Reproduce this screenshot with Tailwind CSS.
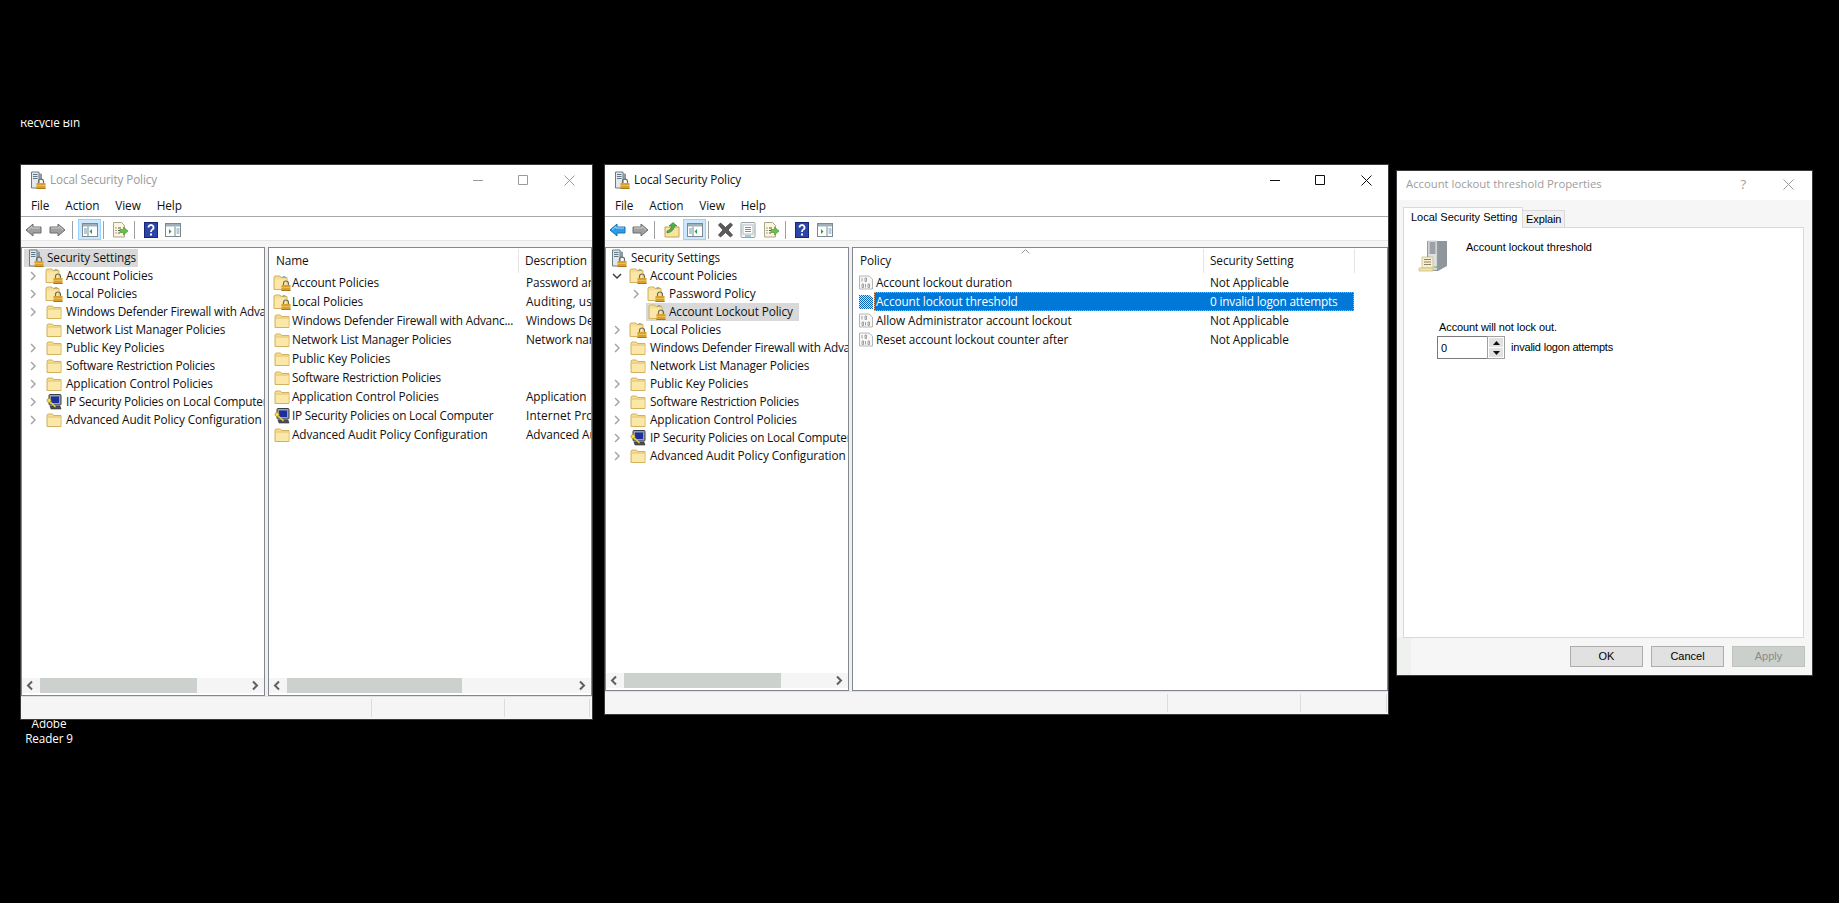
<!DOCTYPE html>
<html lang="en">
<head>
<meta charset="UTF-8">
<title>Local Security Policy</title>
<script src="https://cdn.jsdelivr.net/npm/@tailwindcss/browser@4"></script>
</head>
<body class="w-[1839px] h-[903px] bg-black overflow-hidden relative font-['Open_Sans',sans-serif] text-[11.8px] tracking-[-0.1px] text-[#111]">

<!-- shared icons -->
<svg class="absolute w-0 h-0" aria-hidden="true">
  <defs>
    <pattern id="dither" width="2" height="2" patternUnits="userSpaceOnUse">
      <rect width="2" height="2" fill="#0a62b8"/><rect width="1" height="1" fill="#d4e6f5"/><rect x="1" y="1" width="1" height="1" fill="#d4e6f5"/>
    </pattern>
    <symbol id="folder" viewBox="0 0 16 16">
      <path d="M1 14.500V3L2 2h4.500l1 1.500H15v11z" fill="#f7dd92" stroke="#d3b25f"/>
      <path d="M2 5.500h12.500v8.500H2z" fill="#fbe8a8"/>
      <path d="M1.500 5h13" stroke="#e3c678"/>
    </symbol>
    <symbol id="folderlock" viewBox="0 0 18 16">
      <path d="M1 14.500V2L2 1h5l1 1.500h6v12z" fill="#f7dd92" stroke="#d3b25f"/>
      <path d="M2 4.500h11.500V14H2z" fill="#fbe8a8"/>
      <path d="M9.500 1.800h3" stroke="#5a9bd4"/>
      <path d="M10.500 10V8.500a2.500 2.500 0 0 1 5 0V10" fill="none" stroke="#6e6a58" stroke-width="1.200"/>
      <rect x="8.500" y="10" width="9" height="6" fill="#d9a02e"/>
      <path d="M8.500 12.500h9" stroke="#eec46a" stroke-width=".8"/>
      <path d="M8.500 15.500h9" stroke="#a67819"/>
    </symbol>
    <symbol id="serverlock" viewBox="0 0 16 18">
      <path d="M1.500 1h7.500v16H1.500z" fill="#e4e8ea" stroke="#6d7a82"/>
      <path d="M3 3.500h4.500M3 5.500h4.500M3 7.500h4.500" stroke="#5d7688"/>
      <path d="M9 2l3 1v6H9z" fill="#8d9aa3"/>
      <path d="M8.500 12v-1.500a2.500 2.500 0 0 1 5 0V12" fill="none" stroke="#6e6a58" stroke-width="1.200"/>
      <rect x="6.500" y="12" width="9" height="6" fill="#d9a02e"/>
      <path d="M6.500 14.500h9" stroke="#eec46a" stroke-width=".8"/>
      <path d="M6.500 17.500h9" stroke="#a67819"/>
    </symbol>
    <symbol id="ipsec" viewBox="0 0 16 16">
      <rect x="3" y="0.500" width="12" height="10.500" rx="1" fill="#9aa0a6" stroke="#3b3f44"/>
      <rect x="5" y="2.500" width="8" height="6.500" fill="#1b2f9e"/>
      <path d="M4 12h10l1 3H5z" fill="#4d5157" stroke="#2a2c30" stroke-width=".6"/>
      <circle cx="3" cy="6.500" r="2" fill="#f4e04a" stroke="#a89420" stroke-width=".7"/>
      <path d="M4.500 8l5 5" stroke="#e8d23a" stroke-width="1.500"/>
    </symbol>
    <symbol id="binary" viewBox="0 0 14 15">
      <path d="M.5 1h9.500l3.500 3v10H.5z" fill="#f8f8f8" stroke="#b5b5b5"/>
      <path d="M3 3v3.500M6 3h1.500v3.500H6zM3 9h1.500v3.500H3zM6.500 9v3.500M9 9h1.500v3.500H9z" fill="none" stroke="#a0a0a0"/>
    </symbol>
    <symbol id="binarysel" viewBox="0 0 14 15">
      <path d="M0 1h10l4 3v11H0z" fill="url(#dither)"/>
    </symbol>
    <symbol id="chevr" viewBox="0 0 16 16"><path d="M6 4l4 4-4 4" fill="none" stroke="#a6a6a6" stroke-width="1.500"/></symbol>
    <symbol id="chevd" viewBox="0 0 16 16"><path d="M4 6l4 4 4-4" fill="none" stroke="#404040" stroke-width="1.500"/></symbol>
    <symbol id="sbl" viewBox="0 0 15 15"><path d="M9 3.500L5 7.500l4 4" fill="none" stroke="#5f5f5f" stroke-width="2"/></symbol>
    <symbol id="sbr" viewBox="0 0 15 15"><path d="M6 3.500l4 4-4 4" fill="none" stroke="#5f5f5f" stroke-width="2"/></symbol>
    <symbol id="back" viewBox="0 0 17 16"><path d="M1 8l7-6v3h8v6H8v3z" fill="#a0a0a0" stroke="#6d6d6d"/><path d="M3 8l4-3.500V6h8" fill="none" stroke="#d0d0d0"/></symbol>
    <symbol id="backon" viewBox="0 0 17 16"><path d="M1 8l7-6v3h8v6H8v3z" fill="#2a9be6" stroke="#1a6fb5"/><path d="M3 8l4-3.500V6h8" fill="none" stroke="#a9dcf8"/></symbol>
    <symbol id="fwd" viewBox="0 0 17 16"><path d="M16 8L9 2v3H1v6h8v3z" fill="#a0a0a0" stroke="#6d6d6d"/><path d="M2 6h8V4.500L14 8" fill="none" stroke="#d0d0d0"/></symbol>
    <symbol id="panel" viewBox="0 0 16 14">
      <rect x=".5" y=".5" width="15" height="13" fill="#fff" stroke="#7a8a90"/>
      <path d="M1 1h14v2.500H1z" fill="#9fb0b8"/>
      <path d="M6 3.500V13" stroke="#7a8a90"/>
      <path d="M2 6h3M2 8h3M2 10h3" stroke="#6a9ab5"/>
      <path d="M10 6v5L7.500 8.500z" fill="#22a34a"/>
    </symbol>
    <symbol id="panelr" viewBox="0 0 16 14">
      <rect x=".5" y=".5" width="15" height="13" fill="#fff" stroke="#7a8a90"/>
      <path d="M1 1h14v2.500H1z" fill="#9fb0b8"/>
      <path d="M10 3.500V13" stroke="#7a8a90"/>
      <path d="M11.500 6h3M11.500 8h3M11.500 10h3" stroke="#6a9ab5"/>
      <path d="M4 6v5l2.500-2.500z" fill="#22a34a"/>
    </symbol>
    <symbol id="export" viewBox="0 0 16 16">
      <path d="M1.500.5h8l3 3v11.500h-11z" fill="#fbf6dc" stroke="#a9a68a"/>
      <path d="M3.500 6h1M3.500 8.500h1M3.500 11h1M6 6h3M6 8.500h2M6 11h2" stroke="#555"/>
      <path d="M8 7.500h3.500V5L16 9l-4.500 4v-2.500H8z" fill="#6cc04a" stroke="#3f8f2c" stroke-width=".6"/>
    </symbol>
    <symbol id="help" viewBox="0 0 14 16">
      <rect width="14" height="16" fill="#2c46a8"/><rect x=".5" y=".5" width="13" height="15" fill="none" stroke="#16277a"/>
      <path d="M4.500 5.500a2.500 2.500 0 1 1 3.500 2.300c-.8.400-1 1-1 2.200" fill="none" stroke="#fff" stroke-width="1.800"/>
      <rect x="6" y="11.500" width="2" height="2" fill="#fff"/>
    </symbol>
    <symbol id="upfolder" viewBox="0 0 16 16">
      <path d="M1 15V5h14v10z" fill="#f9e3a0" stroke="#c4a458"/>
      <path d="M3 9c3-1 4-2.500 4.500-5H5l4-3.500L13 4h-2.500C10 8 7 10.500 3 11z" fill="#4fb04a" stroke="#2d7f2b" stroke-width=".6"/>
    </symbol>
    <symbol id="delete" viewBox="0 0 17 16">
      <path d="M1.500 3L3.500 1l5 4.500L13.500 1l2 2-4.500 5 4.500 5-2 2-5-4.500L3.500 15l-2-2L6 8z" fill="#5b5b5b" stroke="#3f3f3f" stroke-width=".8"/>
    </symbol>
    <symbol id="props" viewBox="0 0 16 16">
      <rect x="1" y=".5" width="14" height="15" rx="1" fill="#f2f4f5" stroke="#9aa5aa"/>
      <rect x="3" y="3" width="10" height="9" fill="#fff" stroke="#b4bdc2"/>
      <path d="M5 5.500h6M5 7.500h6M5 9.500h6" stroke="#7f8c93"/>
      <path d="M5 14h6" stroke="#3aa0dc"/>
    </symbol>
    <symbol id="serverdoc" viewBox="0 0 30 32">
      <path d="M9 1h20v25l-9 5H9z" fill="#8f979c"/>
      <path d="M10 1h9v29h-9z" fill="#dfe2e3" stroke="#a4aaad" stroke-width=".5"/>
      <path d="M11.500 3h6M11.500 5h6M11.500 7h6M11.500 9h6M11.500 11h6M11.500 13h6" stroke="#59636a"/>
      <path d="M16 27h3" stroke="#4fb04a"/>
      <path d="M4 17h11v11H4z" fill="#f9efcf" stroke="#c4b27c" stroke-width=".7"/>
      <path d="M1 28h14v3H1z" fill="#f3e3ae" stroke="#c4b27c" stroke-width=".7"/>
      <path d="M6 19.500h7M6 22h7M6 24.500h7" stroke="#8b8268"/>
    </symbol>
  </defs>
</svg>

<!-- desktop labels behind the windows -->
<div class="absolute left-[20px] top-[120px] h-[8px] overflow-hidden text-white text-[11.7px] leading-[8px] whitespace-nowrap"><span class="block -mt-[2px]">Recycle Bin</span></div>
<div class="absolute left-[24px] top-[716px] w-[50px] text-center text-white text-[11.7px] leading-[15px] whitespace-nowrap">Adobe<br>Reader 9</div>

<!-- Local Security Policy, inactive -->
<section class="absolute left-[20px] top-[164px] w-[573px] h-[556px] bg-white border border-[#3a3a3a] flex flex-col">
  <header class="h-[31px] flex items-center shrink-0 pl-[9px] pb-px text-[#9a9a9a] text-[11.7px]">
    <svg class="w-[16px] h-[18px] mr-[4px]"><use href="#serverlock"/></svg>
    <span>Local Security Policy</span>
    <div class="ml-auto flex items-center pr-[17px] gap-[35px]">
      <svg class="w-[10px] h-[10px]" viewBox="0 0 10 10"><path d="M0 5.500h10" stroke="#9a9a9a"/></svg>
      <svg class="w-[10px] h-[10px]" viewBox="0 0 10 10"><path d="M.5.500h9v9h-9z" fill="none" stroke="#9a9a9a"/></svg>
      <svg class="w-[11px] h-[11px] ml-[1px]" viewBox="0 0 11 11"><path d="M.500.500l10 10M10.500.500l-10 10" stroke="#9a9a9a"/></svg>
    </div>
  </header>
  <nav class="h-[21px] shrink-0 flex items-center border-b border-[#a3a9ad] pl-[10px] gap-[16px]">
    <span>File</span><span>Action</span><span>View</span><span>Help</span>
  </nav>
  <div class="h-[23px] shrink-0 flex items-center pl-[4px] pt-[2px]">
    <svg class="w-[17px] h-[16px]"><use href="#back"/></svg>
    <svg class="w-[17px] h-[16px] ml-[7px]"><use href="#fwd"/></svg>
    <span class="w-px h-[18px] bg-[#a0a0a0] ml-[6px]"></span>
    <span class="w-[23px] h-[21px] ml-[5px] bg-[#cce8ff] border border-[#99d1ff] flex items-center justify-center"><svg class="w-[16px] h-[14px]"><use href="#panel"/></svg></span>
    <span class="w-px h-[18px] bg-[#a0a0a0] ml-[2px]"></span>
    <svg class="w-[16px] h-[16px] ml-[8px]"><use href="#export"/></svg>
    <span class="w-px h-[18px] bg-[#a0a0a0] ml-[6px]"></span>
    <svg class="w-[14px] h-[16px] ml-[9px]"><use href="#help"/></svg>
    <svg class="w-[16px] h-[14px] ml-[7px]"><use href="#panelr"/></svg>
  </div>
  <div class="h-[7px] shrink-0 border-t border-[#e6e6e6] bg-[#f5f5f5]"></div>
  <div class="h-[449px] shrink-0 flex gap-[3px] bg-[#f0f0f0]">
    <div class="w-[244px] border border-[#828790] bg-white flex flex-col overflow-hidden">
      <ul class="flex-1 overflow-hidden pt-px whitespace-nowrap">
        <li class="h-[18px] pl-[2px] flex items-center"><span class="w-[114px] h-[18px] bg-[#d9d9d9] flex items-center pl-[4px]"><svg class="w-[16px] h-[18px] mr-[3px] shrink-0"><use href="#serverlock"/></svg>Security Settings</span></li>
        <li class="h-[18px] pl-[3px] flex items-center"><svg class="w-[16px] h-[16px] mr-[4px] shrink-0"><use href="#chevr"/></svg><svg class="w-[18px] h-[16px] mr-[3px] shrink-0"><use href="#folderlock"/></svg>Account Policies</li>
        <li class="h-[18px] pl-[3px] flex items-center"><svg class="w-[16px] h-[16px] mr-[4px] shrink-0"><use href="#chevr"/></svg><svg class="w-[18px] h-[16px] mr-[3px] shrink-0"><use href="#folderlock"/></svg>Local Policies</li>
        <li class="h-[18px] pl-[3px] flex items-center tracking-[-0.2px]"><svg class="w-[16px] h-[16px] mr-[5px] shrink-0"><use href="#chevr"/></svg><svg class="w-[16px] h-[16px] mr-[4px] shrink-0"><use href="#folder"/></svg>Windows Defender Firewall with Advanced Security</li>
        <li class="h-[18px] pl-[24px] flex items-center tracking-[-0.2px]"><svg class="w-[16px] h-[16px] mr-[4px] shrink-0"><use href="#folder"/></svg>Network List Manager Policies</li>
        <li class="h-[18px] pl-[3px] flex items-center"><svg class="w-[16px] h-[16px] mr-[5px] shrink-0"><use href="#chevr"/></svg><svg class="w-[16px] h-[16px] mr-[4px] shrink-0"><use href="#folder"/></svg>Public Key Policies</li>
        <li class="h-[18px] pl-[3px] flex items-center tracking-[-0.2px]"><svg class="w-[16px] h-[16px] mr-[5px] shrink-0"><use href="#chevr"/></svg><svg class="w-[16px] h-[16px] mr-[4px] shrink-0"><use href="#folder"/></svg>Software Restriction Policies</li>
        <li class="h-[18px] pl-[3px] flex items-center"><svg class="w-[16px] h-[16px] mr-[5px] shrink-0"><use href="#chevr"/></svg><svg class="w-[16px] h-[16px] mr-[4px] shrink-0"><use href="#folder"/></svg>Application Control Policies</li>
        <li class="h-[18px] pl-[3px] flex items-center tracking-[-0.2px]"><svg class="w-[16px] h-[16px] mr-[5px] shrink-0"><use href="#chevr"/></svg><svg class="w-[16px] h-[16px] mr-[4px] shrink-0"><use href="#ipsec"/></svg>IP Security Policies on Local Computer</li>
        <li class="h-[18px] pl-[3px] flex items-center"><svg class="w-[16px] h-[16px] mr-[5px] shrink-0"><use href="#chevr"/></svg><svg class="w-[16px] h-[16px] mr-[4px] shrink-0"><use href="#folder"/></svg>Advanced Audit Policy Configuration</li>
      </ul>
      <div class="h-[15px] mb-[2px] shrink-0 bg-[#f5f5f5] flex items-center">
        <svg class="w-[15px] h-[15px] ml-px shrink-0"><use href="#sbl"/></svg>
        <span class="w-[157px] h-[15px] ml-[2px] bg-[#cdd1cd]"></span>
        <svg class="w-[15px] h-[15px] ml-auto mr-[2px] shrink-0"><use href="#sbr"/></svg>
      </div>
    </div>
    <div class="flex-1 border border-[#828790] bg-white flex flex-col overflow-hidden">
      <div class="h-[25px] shrink-0 flex items-center whitespace-nowrap">
        <span class="w-[250px] h-[24px] pl-[7px] flex items-center border-r border-[#e5e5e5]">Name</span>
        <span class="pl-[6px]">Description</span>
      </div>
      <ul class="flex-1 whitespace-nowrap overflow-hidden">
        <li class="h-[19px] flex items-center pl-[4px]"><svg class="w-[18px] h-[16px] mr-px shrink-0"><use href="#folderlock"/></svg><span class="w-[234px] shrink-0">Account Policies</span><span>Password and account lockout policies</span></li>
        <li class="h-[19px] flex items-center pl-[4px]"><svg class="w-[18px] h-[16px] mr-px shrink-0"><use href="#folderlock"/></svg><span class="w-[234px] shrink-0">Local Policies</span><span class="tracking-[0.1px]">Auditing, user rights and security options</span></li>
        <li class="h-[19px] flex items-center pl-[5px]"><svg class="w-[16px] h-[16px] mr-[2px] shrink-0"><use href="#folder"/></svg><span class="w-[234px] shrink-0 tracking-[-0.2px]">Windows Defender Firewall with Advanc...</span><span>Windows Defender Firewall</span></li>
        <li class="h-[19px] flex items-center pl-[5px]"><svg class="w-[16px] h-[16px] mr-[2px] shrink-0"><use href="#folder"/></svg><span class="w-[234px] shrink-0 tracking-[-0.2px]">Network List Manager Policies</span><span>Network name, icons</span></li>
        <li class="h-[19px] flex items-center pl-[5px]"><svg class="w-[16px] h-[16px] mr-[2px] shrink-0"><use href="#folder"/></svg><span class="w-[234px] shrink-0">Public Key Policies</span></li>
        <li class="h-[19px] flex items-center pl-[5px]"><svg class="w-[16px] h-[16px] mr-[2px] shrink-0"><use href="#folder"/></svg><span class="w-[234px] shrink-0 tracking-[-0.2px]">Software Restriction Policies</span></li>
        <li class="h-[19px] flex items-center pl-[5px]"><svg class="w-[16px] h-[16px] mr-[2px] shrink-0"><use href="#folder"/></svg><span class="w-[234px] shrink-0">Application Control Policies</span><span>Application</span></li>
        <li class="h-[19px] flex items-center pl-[5px]"><svg class="w-[16px] h-[16px] mr-[2px] shrink-0"><use href="#ipsec"/></svg><span class="w-[234px] shrink-0 tracking-[-0.2px]">IP Security Policies on Local Computer</span><span class="tracking-[0.1px]">Internet Protocol</span></li>
        <li class="h-[19px] flex items-center pl-[5px]"><svg class="w-[16px] h-[16px] mr-[2px] shrink-0"><use href="#folder"/></svg><span class="w-[234px] shrink-0">Advanced Audit Policy Configuration</span><span>Advanced Audit</span></li>
      </ul>
      <div class="h-[15px] mb-[2px] shrink-0 bg-[#f5f5f5] flex items-center">
        <svg class="w-[15px] h-[15px] ml-px shrink-0"><use href="#sbl"/></svg>
        <span class="w-[175px] h-[15px] ml-[2px] bg-[#cdd1cd]"></span>
        <svg class="w-[15px] h-[15px] ml-auto mr-[2px] shrink-0"><use href="#sbr"/></svg>
      </div>
    </div>
  </div>
  <footer class="flex-1 bg-[#f5f5f5] flex items-stretch py-[2px] border-t border-[#e0e0e0]">
    <span class="w-[351px] border-r border-[#dcdcdc]"></span>
    <span class="w-[133px] border-r border-[#dcdcdc]"></span>
    <span class="w-[85px] border-r border-[#dcdcdc]"></span>
  </footer>
</section>

<!-- Local Security Policy, active -->
<section class="absolute left-[604px] top-[164px] w-[785px] h-[551px] bg-white border border-[#3a3a3a] flex flex-col">
  <header class="h-[31px] flex items-center shrink-0 pl-[9px] pb-px text-[11.7px]">
    <svg class="w-[16px] h-[18px] mr-[4px]"><use href="#serverlock"/></svg>
    <span>Local Security Policy</span>
    <div class="ml-auto flex items-center pr-[16px] gap-[35px]">
      <svg class="w-[10px] h-[10px]" viewBox="0 0 10 10"><path d="M0 5.500h10" stroke="#111"/></svg>
      <svg class="w-[10px] h-[10px]" viewBox="0 0 10 10"><path d="M.5.500h9v9h-9z" fill="none" stroke="#111"/></svg>
      <svg class="w-[11px] h-[11px] ml-[1px]" viewBox="0 0 11 11"><path d="M.500.500l10 10M10.500.500l-10 10" stroke="#111"/></svg>
    </div>
  </header>
  <nav class="h-[21px] shrink-0 flex items-center border-b border-[#a3a9ad] pl-[10px] gap-[16px]">
    <span>File</span><span>Action</span><span>View</span><span>Help</span>
  </nav>
  <div class="h-[23px] shrink-0 flex items-center pl-[4px] pt-[2px]">
    <svg class="w-[17px] h-[16px]"><use href="#backon"/></svg>
    <svg class="w-[17px] h-[16px] ml-[6px]"><use href="#fwd"/></svg>
    <span class="w-px h-[18px] bg-[#a0a0a0] ml-[5px]"></span>
    <svg class="w-[16px] h-[16px] ml-[9px]"><use href="#upfolder"/></svg>
    <span class="w-[23px] h-[21px] ml-[3px] bg-[#cce8ff] border border-[#99d1ff] flex items-center justify-center"><svg class="w-[16px] h-[14px]"><use href="#panel"/></svg></span>
    <span class="w-px h-[18px] bg-[#a0a0a0] ml-[2px]"></span>
    <svg class="w-[17px] h-[16px] ml-[8px]"><use href="#delete"/></svg>
    <svg class="w-[16px] h-[16px] ml-[6px]"><use href="#props"/></svg>
    <svg class="w-[16px] h-[16px] ml-[7px]"><use href="#export"/></svg>
    <span class="w-px h-[18px] bg-[#a0a0a0] ml-[6px]"></span>
    <svg class="w-[14px] h-[16px] ml-[9px]"><use href="#help"/></svg>
    <svg class="w-[16px] h-[14px] ml-[8px]"><use href="#panelr"/></svg>
  </div>
  <div class="h-[7px] shrink-0 border-t border-[#e6e6e6] bg-[#f5f5f5]"></div>
  <div class="h-[444px] shrink-0 flex gap-[3px] bg-[#f0f0f0]">
    <div class="w-[244px] border border-[#828790] bg-white flex flex-col overflow-hidden">
      <ul class="flex-1 overflow-hidden pt-px whitespace-nowrap">
        <li class="h-[18px] pl-[5px] flex items-center"><svg class="w-[16px] h-[18px] mr-[4px] shrink-0"><use href="#serverlock"/></svg>Security Settings</li>
        <li class="h-[18px] pl-[3px] flex items-center"><svg class="w-[16px] h-[16px] mr-[4px] shrink-0"><use href="#chevd"/></svg><svg class="w-[18px] h-[16px] mr-[3px] shrink-0"><use href="#folderlock"/></svg>Account Policies</li>
        <li class="h-[18px] pl-[22px] flex items-center"><svg class="w-[16px] h-[16px] mr-[3px] shrink-0"><use href="#chevr"/></svg><svg class="w-[18px] h-[16px] mr-[4px] shrink-0"><use href="#folderlock"/></svg>Password Policy</li>
        <li class="h-[18px] pl-[40px] flex items-center"><span class="w-[153px] h-[18px] bg-[#d9d9d9] flex items-center pl-[2px]"><svg class="w-[18px] h-[16px] mr-[3px] shrink-0"><use href="#folderlock"/></svg>Account Lockout Policy</span></li>
        <li class="h-[18px] pl-[3px] flex items-center"><svg class="w-[16px] h-[16px] mr-[4px] shrink-0"><use href="#chevr"/></svg><svg class="w-[18px] h-[16px] mr-[3px] shrink-0"><use href="#folderlock"/></svg>Local Policies</li>
        <li class="h-[18px] pl-[3px] flex items-center tracking-[-0.2px]"><svg class="w-[16px] h-[16px] mr-[5px] shrink-0"><use href="#chevr"/></svg><svg class="w-[16px] h-[16px] mr-[4px] shrink-0"><use href="#folder"/></svg>Windows Defender Firewall with Advanced Security</li>
        <li class="h-[18px] pl-[24px] flex items-center tracking-[-0.2px]"><svg class="w-[16px] h-[16px] mr-[4px] shrink-0"><use href="#folder"/></svg>Network List Manager Policies</li>
        <li class="h-[18px] pl-[3px] flex items-center"><svg class="w-[16px] h-[16px] mr-[5px] shrink-0"><use href="#chevr"/></svg><svg class="w-[16px] h-[16px] mr-[4px] shrink-0"><use href="#folder"/></svg>Public Key Policies</li>
        <li class="h-[18px] pl-[3px] flex items-center tracking-[-0.2px]"><svg class="w-[16px] h-[16px] mr-[5px] shrink-0"><use href="#chevr"/></svg><svg class="w-[16px] h-[16px] mr-[4px] shrink-0"><use href="#folder"/></svg>Software Restriction Policies</li>
        <li class="h-[18px] pl-[3px] flex items-center"><svg class="w-[16px] h-[16px] mr-[5px] shrink-0"><use href="#chevr"/></svg><svg class="w-[16px] h-[16px] mr-[4px] shrink-0"><use href="#folder"/></svg>Application Control Policies</li>
        <li class="h-[18px] pl-[3px] flex items-center tracking-[-0.2px]"><svg class="w-[16px] h-[16px] mr-[5px] shrink-0"><use href="#chevr"/></svg><svg class="w-[16px] h-[16px] mr-[4px] shrink-0"><use href="#ipsec"/></svg>IP Security Policies on Local Computer</li>
        <li class="h-[18px] pl-[3px] flex items-center"><svg class="w-[16px] h-[16px] mr-[5px] shrink-0"><use href="#chevr"/></svg><svg class="w-[16px] h-[16px] mr-[4px] shrink-0"><use href="#folder"/></svg>Advanced Audit Policy Configuration</li>
      </ul>
      <div class="h-[15px] mb-[2px] shrink-0 bg-[#f5f5f5] flex items-center">
        <svg class="w-[15px] h-[15px] ml-px shrink-0"><use href="#sbl"/></svg>
        <span class="w-[157px] h-[15px] ml-[2px] bg-[#cdd1cd]"></span>
        <svg class="w-[15px] h-[15px] ml-auto mr-[2px] shrink-0"><use href="#sbr"/></svg>
      </div>
    </div>
    <div class="flex-1 border border-[#828790] bg-white flex flex-col overflow-hidden relative">
      <svg class="absolute left-[168px] top-[1px] w-[9px] h-[5px]" viewBox="0 0 9 5"><path d="M.5 4.500l4-4 4 4" fill="none" stroke="#9a9a9a"/></svg>
      <div class="h-[25px] shrink-0 flex items-center whitespace-nowrap">
        <span class="w-[351px] h-[24px] pl-[7px] flex items-center border-r border-[#e5e5e5]">Policy</span>
        <span class="w-[151px] h-[24px] pl-[6px] flex items-center border-r border-[#e5e5e5]">Security Setting</span>
      </div>
      <ul class="whitespace-nowrap">
        <li class="h-[19px] flex items-center pl-[6px]"><svg class="w-[14px] h-[15px] mr-px shrink-0"><use href="#binary"/></svg><span class="w-[330px] shrink-0 pl-[2px] mr-px">Account lockout duration</span><span class="pl-[5px]">Not Applicable</span></li>
        <li class="h-[19px] flex items-center pl-[6px]"><svg class="w-[14px] h-[15px] mr-px shrink-0"><use href="#binarysel"/></svg><span class="w-[480px] shrink-0 h-[19px] bg-[#0078d7] text-white flex items-center border border-dotted border-[#f0a060]"><span class="w-[331px] shrink-0 pl-px">Account lockout threshold</span><span class="pl-[4px] tracking-[-0.2px]">0 invalid logon attempts</span></span></li>
        <li class="h-[19px] flex items-center pl-[6px]"><svg class="w-[14px] h-[15px] mr-px shrink-0"><use href="#binary"/></svg><span class="w-[330px] shrink-0 pl-[2px] mr-px">Allow Administrator account lockout</span><span class="pl-[5px]">Not Applicable</span></li>
        <li class="h-[19px] flex items-center pl-[6px]"><svg class="w-[14px] h-[15px] mr-px shrink-0"><use href="#binary"/></svg><span class="w-[330px] shrink-0 pl-[2px] mr-px">Reset account lockout counter after</span><span class="pl-[5px]">Not Applicable</span></li>
      </ul>
    </div>
  </div>
  <footer class="flex-1 bg-[#f5f5f5] flex items-stretch py-[2px] border-t border-[#e0e0e0]">
    <span class="w-[563px] border-r border-[#dcdcdc]"></span>
    <span class="w-[133px] border-r border-[#dcdcdc]"></span>
    <span class="w-[86px] border-r border-[#dcdcdc]"></span>
  </footer>
</section>

<!-- Properties dialog -->
<section class="absolute left-[1396px] top-[170px] w-[417px] h-[506px] bg-[#f6f6f6] border border-[#3a3a3a] flex flex-col font-['Liberation_Sans',sans-serif] text-[11px] tracking-normal text-black">
  <header class="h-[29px] bg-white flex items-center shrink-0 pl-[9px] pb-[2px] text-[#9d9d9d] font-['Open_Sans',sans-serif] text-[11.3px]">
    <span>Account lockout threshold Properties</span>
    <span class="ml-auto text-[13px] text-[#9d9d9d] mr-[37px]">?</span>
    <svg class="w-[11px] h-[11px] mr-[18px]" viewBox="0 0 11 11"><path d="M.500.500l10 10M10.500.500l-10 10" stroke="#9a9a9a"/></svg>
  </header>
  <div class="flex-1 pl-[6px] pr-[5px] pt-[7px] relative flex flex-col">
    <span class="absolute left-0 bottom-0 w-[14px] h-[38px] bg-[#eef1ee]"></span>
    <div class="flex items-end h-[21px] relative z-10 -mb-px">
      <span class="w-[120px] h-[21px] bg-white border border-b-0 border-[#d9d9d9] pl-[7px] pt-[1px]">Local Security Setting</span>
      <span class="w-[42px] h-[18px] bg-[#f0f0f0] border border-l-0 border-[#d9d9d9] pl-[3px] tracking-[-0.1px]">Explain</span>
    </div>
    <div class="h-[411px] w-[401px] bg-white border border-[#d9d9d9] pl-[14px] pt-[12px] relative">
      <div class="flex">
        <svg class="w-[30px] h-[32px]"><use href="#serverdoc"/></svg>
        <span class="ml-[18px] leading-[14px]">Account lockout threshold</span>
      </div>
      <p class="ml-[21px] mt-[48px] leading-[14px] tracking-[-0.1px]">Account will not lock out.</p>
      <div class="ml-[19px] mt-[2px] flex items-center">
        <span class="w-[50px] h-[23px] border border-[#7a7a7a] pl-[3px] pt-[3px] bg-white border-r-0">0</span>
        <span class="w-[18px] h-[23px] border border-[#a0a0a0] p-px flex flex-col gap-px">
          <span class="flex-1 bg-[#e1e1e1] flex items-center justify-center"><svg class="w-[7px] h-[4px]" viewBox="0 0 7 4"><path d="M3.500 0L7 4H0z" fill="#111"/></svg></span>
          <span class="flex-1 bg-[#e1e1e1] flex items-center justify-center"><svg class="w-[7px] h-[4px]" viewBox="0 0 7 4"><path d="M3.500 4L7 0H0z" fill="#111"/></svg></span>
        </span>
        <span class="ml-[6px] tracking-[-0.2px]">invalid logon attempts</span>
      </div>
    </div>
    <div class="flex justify-end gap-[8px] mt-[8px] pr-[2px] relative">
      <button type="button" class="w-[73px] h-[21px] bg-[#e1e1e1] border border-[#adadad]">OK</button>
      <button type="button" class="w-[73px] h-[21px] bg-[#e1e1e1] border border-[#adadad]">Cancel</button>
      <button type="button" class="w-[73px] h-[21px] bg-[#ccd0cc] border border-[#bfc3bf] text-[#8a8a8a]">Apply</button>
    </div>
  </div>
</section>

</body>
</html>
